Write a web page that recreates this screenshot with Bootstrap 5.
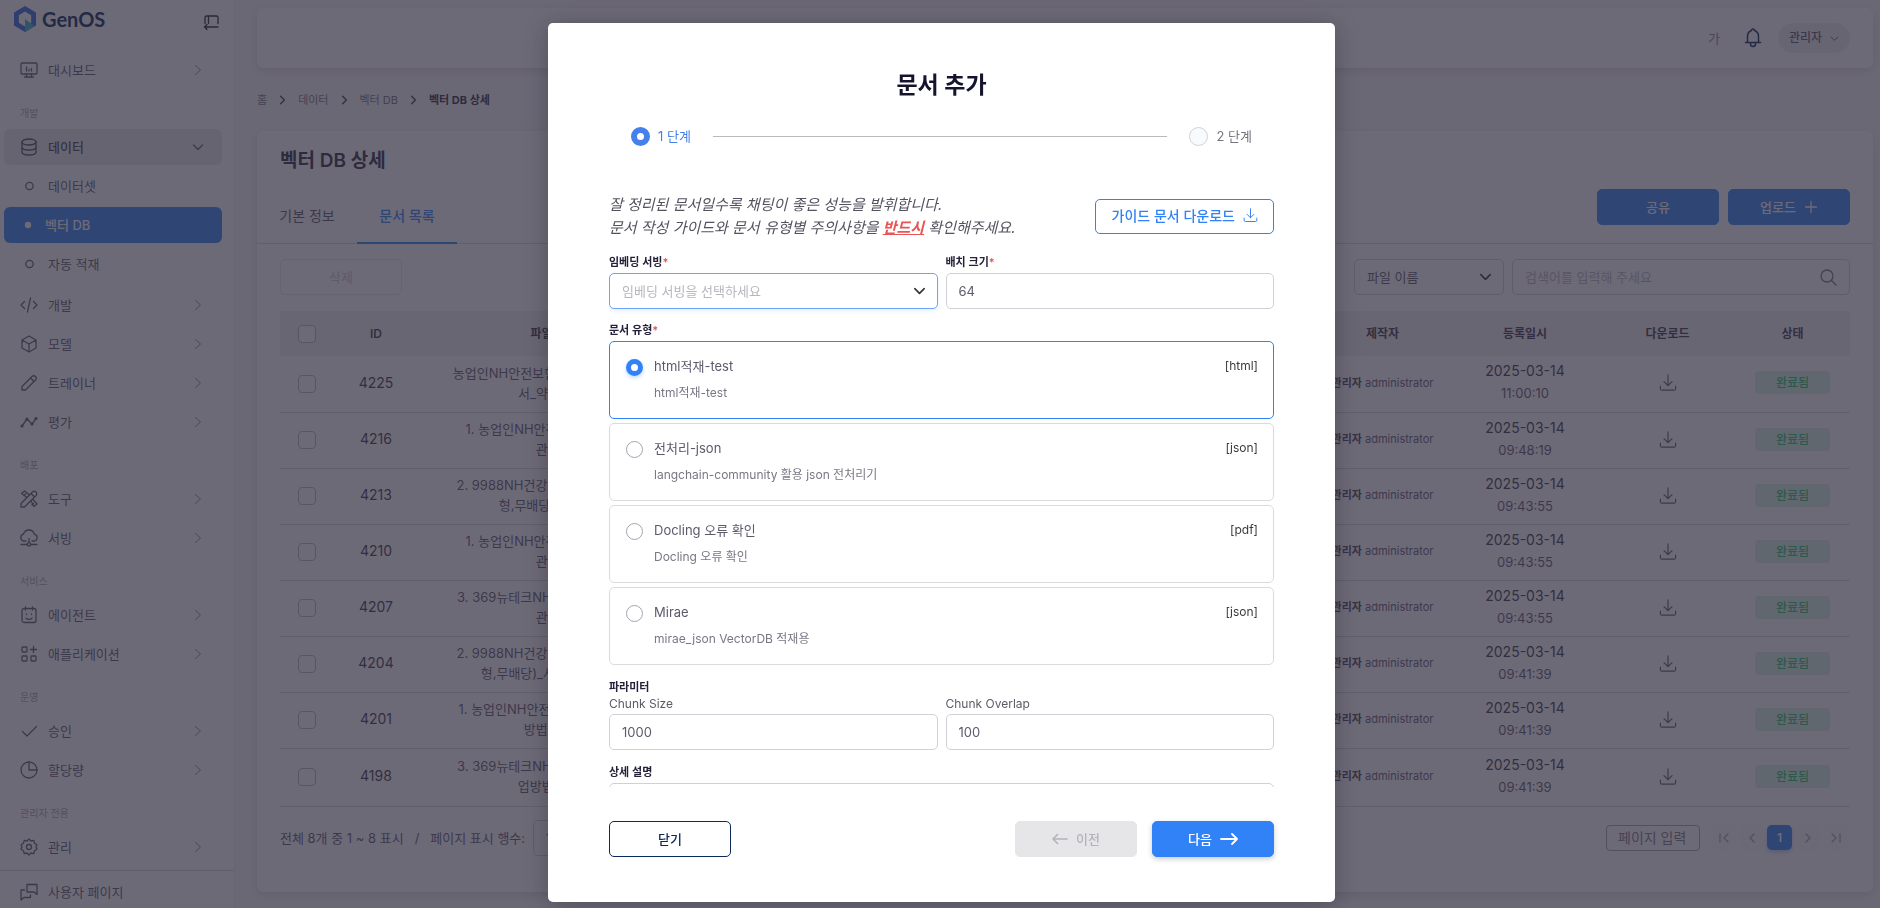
<!DOCTYPE html>
<html lang="ko">
<head>
<meta charset="utf-8">
<meta name="viewport" content="width=device-width, initial-scale=1">
<title>GenOS - 벡터 DB 상세</title>
<link rel="stylesheet" href="https://cdn.jsdelivr.net/npm/bootstrap@5.3.0/dist/css/bootstrap.min.css">
<style>
:root{--ink:#2f2b3d;--body:#5d596c;--soft:#8b8894;--faint:#b8b6be;--line:#dbdade;--brand:#3182f6}
body{font-family:Inter,"Noto Sans CJK KR",sans-serif;font-size:13px;line-height:20px;color:var(--body);background:#f8f7fa;height:100vh;overflow:hidden}
a{color:inherit;text-decoration:none}
svg{display:block;fill:none;stroke:currentColor;stroke-width:1.3;stroke-linecap:round;stroke-linejoin:round;flex:none}
svg.solid{stroke:none}
svg.bold{stroke-width:2}
.btn{font-size:13px;line-height:20px;--bs-btn-border-radius:5px;--bs-btn-padding-y:7px;min-width:122px;font-weight:500}
.btn.icon-only{min-width:0;padding:0;border:0}
.btn-brand{background:var(--brand);border-color:var(--brand);color:#fff}
.form-control,.form-select{font-size:13px;line-height:20px;padding:7px 12px;border-radius:5px;border-color:#d1d0d6;color:var(--body)}
.form-control::placeholder{color:var(--faint)}
.form-select{background-size:15px;background-position:right 10px center;background-image:url("data:image/svg+xml,%3csvg xmlns='http://www.w3.org/2000/svg' viewBox='0 0 16 16'%3e%3cpath fill='none' stroke='%23333' stroke-width='1.7' stroke-linecap='round' stroke-linejoin='round' d='M3 5l5 5 5-5'/%3e%3c/svg%3e")}

.side{width:235px;height:100vh;background:#fff;border-right:1px solid #eeedf0;overflow:hidden}
.side-head{padding:6px 15px 0 14px;margin-bottom:20px}
.brand{gap:6px;font:700 20px/24px Lato,sans-serif;color:#0b2a5b}
.menu{padding:0 12px 0 4px;margin:0;list-style:none}
.menu ul{list-style:none;padding:0 0 2px}
.menu li{margin-bottom:3px}
.menu-item{display:flex;align-items:center;height:36px;padding:0 18px 0 16px;border-radius:6px;font-size:13px}
.menu-item .caret{margin-left:auto;color:var(--soft);stroke-width:1}
.menu-item.open .caret{color:var(--body);stroke-width:1.3}
.menu-item svg:first-child{margin-right:10px}
.menu-item.open{background:#ecebee;color:#4b4858;font-weight:500}
.menu-item.current{background:var(--brand);color:#fff;font-weight:500;padding-left:20px}
.menu-cap{height:35px;padding:9px 0 0 16px;line-height:26px;font-size:10px;color:#a5a3ae}
.side-foot{border-top:1px solid var(--line);margin-top:5px;padding:3px 4px}

.content-area{padding:8px 7px 0 22px}
.panel{background:#fff;border-radius:6px;box-shadow:0 3px 8px rgba(47,43,61,.14)}
.topbar{height:60px;padding:0 23px}
.user-pill{background:#efeef1;border:0;border-radius:15px;height:30px;padding:0 11px;font-size:12px;font-weight:500;color:var(--body)}
.crumbs{height:63px;font-size:11px;color:#77747f;gap:11px}
.crumbs svg{color:#444150}
.crumbs strong{color:var(--ink);font-weight:700}
.page-title{font-size:19px;line-height:26px;font-weight:600;color:var(--ink);margin:0;padding:17px 23px 15px}
.tab-strip{border-bottom:1px solid var(--line)}
.tab-strip .nav-link{width:100px;padding:16px 0 15px;font-size:14px;line-height:22px;text-align:center;color:var(--body);border-bottom:2px solid transparent;margin-bottom:-1px}
.tab-strip .nav-link.active{color:var(--brand);border-color:var(--brand);font-weight:500}
.tab-actions{gap:9px;margin:0 23px 18px auto}
.work{padding:15px 23px 36px}
.doc-table{table-layout:fixed;width:100%;text-align:center;border-collapse:collapse}
.doc-table th{height:45px;background:#f1f0f3;font-size:12px;font-weight:600;color:#3b3848}
.doc-table td{height:56px;border-bottom:1px solid var(--line);padding:0 4px 2px}
.doc-table tr:last-child td{height:58px}
.doc-table .id-cell{font-size:14px;color:#3b3848}
.doc-table .form-check-input{width:18px;height:18px;margin:0;vertical-align:middle;border-color:#b7b5be;border-radius:4px}
.doc-table .day{font-size:14px;line-height:22px;color:#3b3848}
.doc-table .hour{line-height:23px}
.maker{font-size:11px;white-space:nowrap}
.maker b{font-weight:600;color:#4b4858}
.get-file{display:inline-block;margin-top:6px}
.done-tag{display:inline-block;width:75px;line-height:23px;border-radius:4px;background:#d6f4e4;color:#28c76f;font-size:12px;font-weight:500}
.table-foot{padding-top:13px}
.pager{gap:3px;margin:0 2px 0 11px}
.pager a{width:25px;height:25px;border-radius:5px;display:flex;align-items:center;justify-content:center;background:#fcfcfd;color:#a5a3ae;font-weight:600;font-size:12px}
.pager a.on{background:var(--brand);color:#fff;box-shadow:0 2px 4px rgba(49,130,246,.4)}
.page-jump{width:94px;height:26px;padding:0 11px;border-radius:4px;font-size:14px;border-color:#a5a3ae}
.page-jump::placeholder{color:#7c7987}

.modal-backdrop{--bs-backdrop-bg:#2f2b3d;--bs-backdrop-opacity:.7}
.modal.show{padding-left:3px;overflow:hidden}
.doc-dialog{max-width:787px;height:calc(100vh - 29px);margin:23px auto 6px}
.doc-dialog .modal-content{height:100%;border:0;border-radius:5px;padding:48px 61px 45px;box-shadow:0 3px 24px rgba(20,16,34,.3);color:var(--body)}
.doc-dialog h1{font-size:23px;line-height:28px;font-weight:700;color:#15142e;margin:0;text-align:center}
.steps{gap:22px;padding:27px 22px 0}
.steps hr{flex:1;height:1px;border:0;margin:0;background:#bbb;opacity:1}
.step-dot{width:19px;height:19px;border-radius:50%;border:1px solid #ced3da;background:#f8fafc}
.step-dot.on{border:6px solid #4680ea;background:#fff}
.scroller{flex:1;min-height:0;overflow:hidden;margin-top:47px}
.intro{margin-bottom:15px}
.tip{font-size:15px;line-height:23px;font-style:italic;color:#55525f}
.tip u{color:#ea5455;font-weight:600}
.guide-btn{border:1px solid var(--brand);color:var(--brand);font-size:14px;padding:6px 15px 7px 16px}
.field-cap{display:block;font-size:11px;line-height:16px;font-weight:600;color:#24213a;margin:0 0 3px}
.field-cap i{color:#ea5455;font-style:normal}
.sub-cap{display:block;font-size:12px;line-height:18px;color:#5d5a68;margin-bottom:1px}
.picked-select{border-color:#6ea3f7;color:#b8b6be;box-shadow:0 2px 4px rgba(49,130,246,.12)}
.kinds{margin-top:13px}
.kind{display:flex;height:78px;border:1px solid #dbdade;border-radius:5px;padding:13px 15px 0 16px;margin-bottom:4px;cursor:pointer}
.kind .form-check-input{width:17px;height:17px;margin:4px 11px 0 0;border-color:#a5a3ae;background-image:none}
.kind .form-check-input:checked{border:5px solid var(--brand);background:#fff;box-shadow:0 2px 4px rgba(49,130,246,.3)}
.kind:has(:checked){border-color:var(--brand)}
.kind-name{font-size:13px;line-height:22px}
.kind-note{font-size:12px;line-height:20px;margin-top:6px;color:#7a7785}
.kind-type{margin-left:auto;font-size:12px;line-height:22px;color:#3b3b3b}
.params{margin:10px 0 14px}
.close-btn{border-color:#0b2a5b;color:#0b2a5b}
.actions{padding-top:34px}
.prev-btn,.prev-btn:disabled{background:#e6e6e9;border-color:#e6e6e9;color:#b5b3ba;opacity:1;margin-right:15px}
.next-btn{box-shadow:0 2px 5px rgba(47,43,61,.25)}
</style>
</head>
<body class="modal-open">
<svg width="0" height="0" class="position-absolute" aria-hidden="true">
  <symbol id="i-right" viewBox="0 0 12 12"><path d="M3.500 1.500 8.500 6l-5 4.500"/></symbol>
  <symbol id="i-down" viewBox="0 0 12 12"><path d="M1.500 4 6 8.500 10.500 4"/></symbol>
  <symbol id="i-load" viewBox="0 0 20 20"><path d="M10 1v12M5.500 8.500 10 13l4.500-4.500M1.500 13.500v2.500a2 2 0 0 0 2 2h13a2 2 0 0 0 2-2v-2.500"/></symbol>
</svg>

<div class="d-flex">
  <aside class="side flex-shrink-0">
    <div class="side-head d-flex align-items-center justify-content-between">
      <a href="#" class="d-flex align-items-center brand">
        <svg class="solid" width="22" height="26" viewBox="0 0 22 26"><path fill="#2f6be0" fill-rule="evenodd" d="M11 0l11 6.500v13L11 26 0 19.500v-13zM11 5.500 4.800 9.200v7.600L11 20.500l6.200-3.700V9.200z"/><path fill="#2fb8c6" d="M11 13l9.500 7L11 26z"/></svg>
        <span>GenOS</span>
      </a>
      <button class="btn icon-only mt-2" aria-label="메뉴 접기"><svg width="16" height="16" viewBox="0 0 16 16"><path d="M2 8.500V2.500A1.500 1.500 0 0 1 3.500 1h10A1.500 1.500 0 0 1 15 2.500v6M5.500 1v7.500M15 12H1.500M4 9.500 1.500 12 4 14.500"/></svg></button>
    </div>
    <ul class="menu">
      <li><a href="#" class="menu-item"><svg width="18" height="18" viewBox="0 0 18 18"><rect x="1" y="2" width="16" height="11" rx="1"/><path d="M6.500 13v3M11.500 13v3M4.500 16h9M6.500 6v4M9 8.500V10M11.500 7.500V10"/></svg>대시보드<svg class="caret" width="12" height="12"><use href="#i-right"/></svg></a></li>
      <li class="menu-cap">개발</li>
      <li><a href="#" class="menu-item open"><svg width="18" height="18" viewBox="0 0 18 18"><ellipse cx="9" cy="4" rx="7" ry="3"/><path d="M2 4v10c0 1.700 3.100 3 7 3s7-1.300 7-3V4M2 9c0 1.700 3.100 3 7 3s7-1.300 7-3"/></svg>데이터<svg class="caret" width="12" height="12"><use href="#i-down"/></svg></a></li>
      <li class="mb-0"><ul>
        <li><a href="#" class="menu-item"><svg width="18" height="18" viewBox="0 0 18 18"><circle cx="9.500" cy="9" r="3.700"/></svg>데이터셋</a></li>
        <li><a href="#" class="menu-item current"><svg class="solid" width="11" height="18" viewBox="0 0 11 18"><circle cx="4" cy="9" r="3.200" fill="#fff"/></svg>벡터 DB</a></li>
        <li><a href="#" class="menu-item"><svg width="18" height="18" viewBox="0 0 18 18"><circle cx="9.500" cy="9" r="3.700"/></svg>자동 적재</a></li>
      </ul></li>
      <li><a href="#" class="menu-item"><svg width="18" height="18" viewBox="0 0 18 18"><path d="M4.500 5.500 1 9l3.500 3.500M13.500 5.500 17 9l-3.500 3.500M10.500 2l-3 14"/></svg>개발<svg class="caret" width="12" height="12"><use href="#i-right"/></svg></a></li>
      <li><a href="#" class="menu-item"><svg width="18" height="18" viewBox="0 0 18 18"><path d="M9 1l7 4v8l-7 4-7-4V5zM2 5l7 4 7-4M9 9v8"/></svg>모델<svg class="caret" width="12" height="12"><use href="#i-right"/></svg></a></li>
      <li><a href="#" class="menu-item"><svg width="18" height="18" viewBox="0 0 18 18"><path d="M2 16v-3.500L12 2.500a2.400 2.400 0 0 1 3.500 3.500L5.500 16zM10.500 4l3.500 3.500"/></svg>트레이너<svg class="caret" width="12" height="12"><use href="#i-right"/></svg></a></li>
      <li><a href="#" class="menu-item"><svg width="18" height="18" viewBox="0 0 18 18"><path d="M2 13l5-7 5 5 4.500-6"/><g fill="currentColor" stroke="none"><circle cx="2" cy="13" r="1.600"/><circle cx="7" cy="6" r="1.600"/><circle cx="12" cy="11" r="1.600"/><circle cx="16" cy="5.500" r="1.600"/></g></svg>평가<svg class="caret" width="12" height="12"><use href="#i-right"/></svg></a></li>
      <li class="menu-cap">배포</li>
      <li><a href="#" class="menu-item"><svg width="18" height="18" viewBox="0 0 18 18"><path d="M1 17v-3.500L12.500 2a2.300 2.300 0 0 1 3.500 3.500L4.500 17zM7 7.500 1.500 3.500 4.500 1l5 4M11 11l3 5.500 3-2.500-4.500-5M4 5.500l1.500-1.500M12 15l1.500-1.500M11 3.500 14.500 7"/></svg>도구<svg class="caret" width="12" height="12"><use href="#i-right"/></svg></a></li>
      <li><a href="#" class="menu-item"><svg width="18" height="18" viewBox="0 0 18 18"><path d="M6 12H4a3.500 3.500 0 0 1-.5-6.900 5.600 5.600 0 0 1 10.800 0A3.500 3.500 0 0 1 14 12h-2M9 9.500v4M1 15.500h6M11 15.500h6"/><circle cx="9" cy="15.300" r="1.700"/></svg>서빙<svg class="caret" width="12" height="12"><use href="#i-right"/></svg></a></li>
      <li class="menu-cap">서비스</li>
      <li><a href="#" class="menu-item"><svg width="18" height="18" viewBox="0 0 18 18"><rect x="2" y="2.500" width="14" height="14" rx="2"/><path d="M5.500 1v3M12.500 1v3M6 12.300c1.500 1.500 4.500 1.500 6 0M6.500 8v.5M11.500 8v.5"/></svg>에이전트<svg class="caret" width="12" height="12"><use href="#i-right"/></svg></a></li>
      <li><a href="#" class="menu-item"><svg width="18" height="18" viewBox="0 0 18 18"><rect x="2" y="2" width="5" height="5" rx=".8"/><rect x="2" y="11" width="5" height="5" rx=".8"/><rect x="11" y="11" width="5" height="5" rx=".8"/><path d="M13.500 1.500v6M10.500 4.500h6"/></svg>애플리케이션<svg class="caret" width="12" height="12"><use href="#i-right"/></svg></a></li>
      <li class="menu-cap">운영</li>
      <li><a href="#" class="menu-item"><svg width="18" height="18" viewBox="0 0 18 18"><path d="M2.500 9.500 7 14l9.500-9.500"/></svg>승인<svg class="caret" width="12" height="12"><use href="#i-right"/></svg></a></li>
      <li><a href="#" class="menu-item"><svg width="18" height="18" viewBox="0 0 18 18"><circle cx="9" cy="9" r="8"/><path d="M9 1v8h8"/></svg>할당량<svg class="caret" width="12" height="12"><use href="#i-right"/></svg></a></li>
      <li class="menu-cap">관리자 전용</li>
      <li><a href="#" class="menu-item"><svg width="18" height="18" viewBox="0 0 18 18"><path d="M9 1l2 2 2.800-.7.700 2.800L17 7l-1 2 1 2-2.500 1.900-.7 2.800L11 15l-2 2-2-2-2.800.7-.7-2.800L1 11l1-2-1-2 2.500-1.900.7-2.800L7 3z"/><circle cx="9" cy="9" r="2.500"/></svg>관리<svg class="caret" width="12" height="12"><use href="#i-right"/></svg></a></li>
    </ul>
    <div class="side-foot"><a href="#" class="menu-item"><svg width="18" height="18" viewBox="0 0 18 18"><path d="M7 1.500h10v10l-3-2.500H7zM4.500 7H1v10l3-2.500h6.500V12"/></svg>사용자 페이지</a></div>
  </aside>

  <main class="content-area flex-grow-1">
    <header class="panel topbar d-flex align-items-center justify-content-end">
      <span class="me-4" style="color:#8b8894">가</span>
      <button class="btn icon-only me-3" style="color:#0b2a5b" aria-label="알림"><svg width="18" height="20" viewBox="0 0 18 20" style="stroke-width:1.500"><path d="M1.500 14.500h15M3.500 14.500V8.500C3.500 5 6 3 7.500 2.500a1.500 1.500 0 0 1 3 0C12 3 14.500 5 14.500 8.500v6M6.500 15v1a2.500 2.500 0 0 0 5 0v-1"/></svg></button>
      <button class="user-pill d-flex align-items-center gap-2">관리자<svg width="9" height="9"><use href="#i-down" width="9" height="9"/></svg></button>
    </header>
    <nav class="crumbs d-flex align-items-center" aria-label="위치">
      <a href="#">홈</a><svg class="bold" width="9" height="10" viewBox="0 0 12 12"><path d="M3.500 1 8.500 6l-5 5"/></svg>
      <a href="#">데이터</a><svg class="bold" width="9" height="10" viewBox="0 0 12 12"><path d="M3.500 1 8.500 6l-5 5"/></svg>
      <a href="#">벡터 DB</a><svg class="bold" width="9" height="10" viewBox="0 0 12 12"><path d="M3.500 1 8.500 6l-5 5"/></svg>
      <strong>벡터 DB 상세</strong>
    </nav>
    <section class="panel">
      <h2 class="page-title">벡터 DB 상세</h2>
      <div class="tab-strip d-flex align-items-end">
        <nav class="nav"><a class="nav-link" href="#">기본 정보</a><a class="nav-link active" href="#">문서 목록</a></nav>
        <div class="tab-actions d-flex">
          <button class="btn btn-brand">공유</button>
          <button class="btn btn-brand d-flex align-items-center justify-content-center gap-2">업로드<svg width="14" height="14" viewBox="0 0 14 14"><path d="M7 1.500v11M1.500 7h11"/></svg></button>
        </div>
      </div>
      <div class="work">
        <div class="d-flex align-items-center mb-3">
          <button class="btn me-auto" disabled style="color:#b8b6be;border-color:#dbdade">삭제</button>
          <select class="form-select me-2" style="width:150px" aria-label="검색 기준"><option>파일 이름</option></select>
          <div class="position-relative" style="width:338px">
            <input class="form-control" placeholder="검색어를 입력해 주세요" aria-label="검색어">
            <svg class="position-absolute end-0 top-50 translate-middle-y me-2" style="color:#77747f" width="24" height="18" viewBox="0 0 24 18"><circle cx="9" cy="8" r="6"/><path d="M13.500 12.500 18 17"/></svg>
          </div>
        </div>
        <table class="doc-table">
          <colgroup><col style="width:54px"><col style="width:84px"><col style="width:272px"><col><col><col style="width:135px"><col style="width:150px"><col style="width:135px"><col style="width:115px"></colgroup>
          <thead><tr><th><input class="form-check-input" type="checkbox" aria-label="전체 선택"></th><th>ID</th><th>파일 이름</th><th>유형</th><th>청크 수</th><th>제작자</th><th>등록일시</th><th>다운로드</th><th>상태</th></tr></thead>
          <tbody id="docs"></tbody>
        </table>
        <div class="table-foot d-flex align-items-center">
          <label for="rows" style="white-space:pre">전체 8개 중 1 ~ 8 표시   /   페이지 표시 행수:</label>
          <select id="rows" class="form-select ms-2" style="width:90px"><option>10</option></select>
          <input class="form-control page-jump ms-auto" placeholder="페이지 입력" aria-label="페이지 입력">
          <nav class="pager d-flex" aria-label="페이지">
            <a href="#" aria-label="처음"><svg width="12" height="12" viewBox="0 0 12 12"><path d="M2 2v8M10 2 6 6l4 4"/></svg></a>
            <a href="#" aria-label="이전"><svg width="12" height="12" viewBox="0 0 12 12"><path d="M8 2 4 6l4 4"/></svg></a>
            <a href="#" class="on">1</a>
            <a href="#" aria-label="다음"><svg width="12" height="12" viewBox="0 0 12 12"><path d="M4 2l4 4-4 4"/></svg></a>
            <a href="#" aria-label="마지막"><svg width="12" height="12" viewBox="0 0 12 12"><path d="M10 2v8M2 2l4 4-4 4"/></svg></a>
          </nav>
        </div>
      </div>
    </section>
  </main>
</div>

<div class="modal-backdrop show"></div>
<div class="modal show d-block" tabindex="-1" role="dialog" aria-modal="true" aria-labelledby="dlg-title">
  <div class="modal-dialog doc-dialog">
    <div class="modal-content">
      <h1 id="dlg-title">문서 추가</h1>
      <div class="steps d-flex align-items-center">
        <div class="d-flex align-items-center gap-2" style="color:#4680ea"><span class="step-dot on"></span>1 단계</div>
        <hr>
        <div class="d-flex align-items-center gap-2" style="color:#77747f"><span class="step-dot"></span>2 단계</div>
      </div>
      <div class="scroller">
        <div class="intro d-flex align-items-center justify-content-between">
          <div class="tip">잘 정리된 문서일수록 채팅이 좋은 성능을 발휘합니다.<br>문서 작성 가이드와 문서 유형별 주의사항을 <u>반드시</u> 확인해주세요.</div>
          <button class="btn guide-btn d-flex align-items-center gap-2">가이드 문서 다운로드<svg width="15" height="15"><use href="#i-load"/></svg></button>
        </div>
        <div class="row gx-2">
          <div class="col"><label class="field-cap" for="emb">임베딩 서빙<i>*</i></label><select id="emb" class="form-select picked-select"><option>임베딩 서빙을 선택하세요</option></select></div>
          <div class="col"><label class="field-cap" for="batch">배치 크기<i>*</i></label><input id="batch" class="form-control" value="64"></div>
        </div>
        <fieldset class="kinds">
          <legend class="field-cap float-none">문서 유형<i>*</i></legend>
          <label class="kind"><input class="form-check-input" type="radio" name="kind" checked><span><span class="kind-name d-block">html적재-test</span><span class="kind-note d-block">html적재-test</span></span><span class="kind-type">[html]</span></label>
          <label class="kind"><input class="form-check-input" type="radio" name="kind"><span><span class="kind-name d-block">전처리-json</span><span class="kind-note d-block">langchain-community 활용 json 전처리기</span></span><span class="kind-type">[json]</span></label>
          <label class="kind"><input class="form-check-input" type="radio" name="kind"><span><span class="kind-name d-block">Docling 오류 확인</span><span class="kind-note d-block">Docling 오류 확인</span></span><span class="kind-type">[pdf]</span></label>
          <label class="kind"><input class="form-check-input" type="radio" name="kind"><span><span class="kind-name d-block">Mirae</span><span class="kind-note d-block">mirae_json VectorDB 적재용</span></span><span class="kind-type">[json]</span></label>
        </fieldset>
        <div class="params">
          <div class="field-cap mb-0">파라미터</div>
          <div class="row gx-2">
            <div class="col"><label class="sub-cap" for="size">Chunk Size</label><input id="size" class="form-control" value="1000"></div>
            <div class="col"><label class="sub-cap" for="over">Chunk Overlap</label><input id="over" class="form-control" value="100"></div>
          </div>
        </div>
        <label class="field-cap" for="memo">상세 설명</label>
        <textarea id="memo" class="form-control" rows="4"></textarea>
      </div>
      <div class="actions d-flex align-items-center">
        <button class="btn close-btn me-auto">닫기</button>
        <button class="btn prev-btn d-flex align-items-center justify-content-center gap-2" disabled><svg width="16" height="12" viewBox="0 0 16 12" style="stroke-width:1.600"><path d="M15 6H1M5.500 1.500 1 6l4.500 4.500"/></svg>이전</button>
        <button class="btn btn-brand next-btn d-flex align-items-center justify-content-center gap-2">다음<svg width="18" height="12" viewBox="0 0 18 12" style="stroke-width:1.800"><path d="M1 6h16M12 1l5 5-5 5"/></svg></button>
      </div>
    </div>
  </div>
</div>

<script src="https://cdn.jsdelivr.net/npm/bootstrap@5.3.0/dist/js/bootstrap.bundle.min.js"></script>
<script>
const docs = [
  [4225, '농업인NH안전보험(무배당)_사업방법', '서_약관.hwp', '11:00:10'],
  [4216, '1. 농업인NH안전보험(무배당) 약', '관.pdf', '09:48:19'],
  [4213, '2. 9988NH건강보험(갱신형,간편고', '형,무배당)_약관.pdf', '09:43:55'],
  [4210, '1. 농업인NH안전보험(무배당) 약', '관.pdf', '09:43:55'],
  [4207, '3. 369뉴테크NH암보험(무배당)_약', '관.pdf', '09:43:55'],
  [4204, '2. 9988NH건강보험(갱신형,간편고', '형,무배당)_사업방법서.pdf', '09:41:39'],
  [4201, '1. 농업인NH안전보험(무배당)_사업', '방법서.pdf', '09:41:39'],
  [4198, '3. 369뉴테크NH암보험(무배당)_사', '업방법서.pdf', '09:41:39']
];
document.getElementById('docs').innerHTML = docs.map(([id, a, b, time]) => `<tr>
  <td><input class="form-check-input" type="checkbox" aria-label="${id} 선택"></td>
  <td class="id-cell">${id}</td><td>${a}<br>${b}</td><td></td><td></td>
  <td class="maker"><b>관리자</b> administrator</td>
  <td><div class="day">2025-03-14</div><div class="hour">${time}</div></td>
  <td><a href="#" class="get-file" aria-label="다운로드"><svg width="18" height="18"><use href="#i-load"/></svg></a></td>
  <td><span class="done-tag">완료됨</span></td></tr>`).join('');
</script>
</body>
</html>
